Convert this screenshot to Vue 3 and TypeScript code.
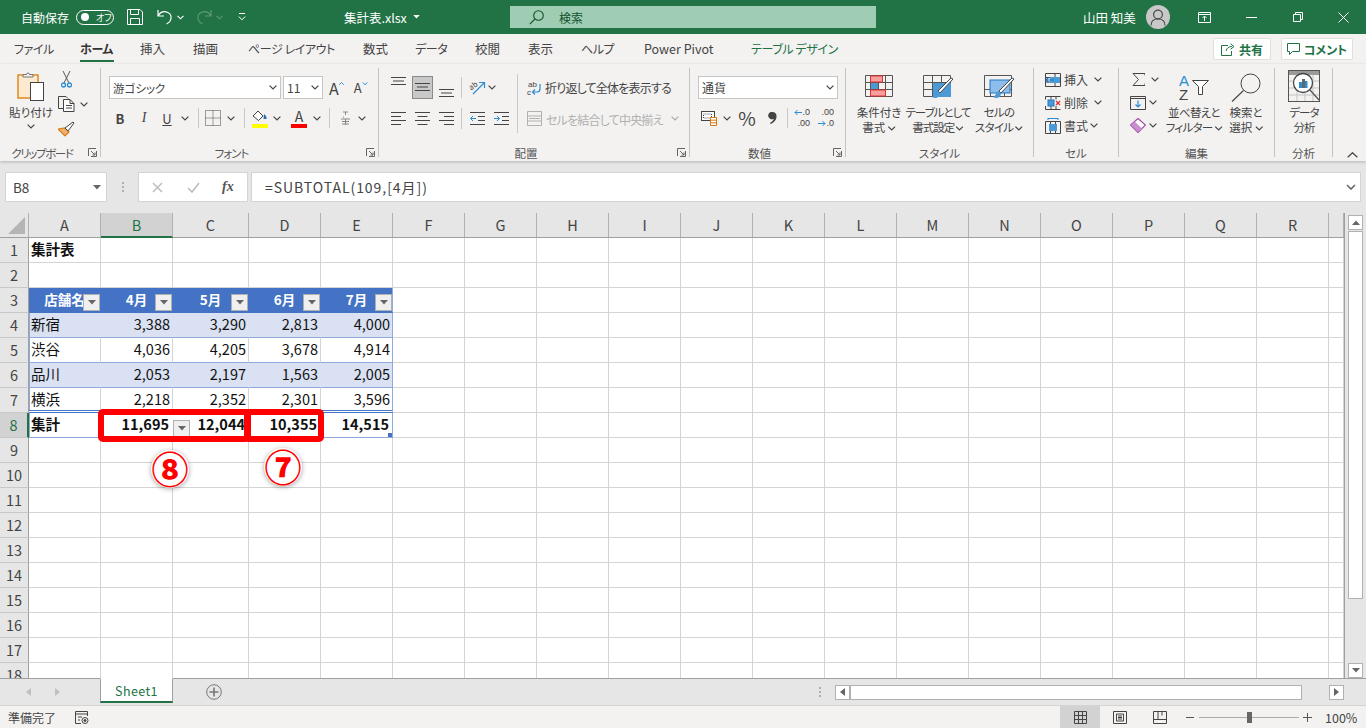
<template>
  <div class="app">
    <svg class="sprite" width="0" height="0">
      <symbol id="chev" viewBox="0 0 8 5"><path d="M.6.6 4 4 7.4.6" fill="none" stroke="#444" stroke-width="1.2" /></symbol>
      <symbol id="launch" viewBox="0 0 9 9"><path d="M.5 8V.5H8M8.5 3v5.5H3M3 3l4 4M4.500 7H7V4.500" fill="none" stroke="#666" /></symbol>
      <symbol id="tri" viewBox="0 0 8 5"><path d="M0 0h8L4 4.500z" fill="#666" /></symbol>
    </svg>

    <!-- タイトルバー -->
    <header class="titlebar">
      <span class="autosave">自動保存</span>
      <span class="toggle"><i class="dot"></i><em>オフ</em></span>
      <svg class="ml13" width="16" height="16" viewBox="0 0 16 16" fill="none" stroke="#fff"><path d="M.5.500h12.500l2.500 2.500v12.500H.5zM3.500.5v5h8v-5M3.500 15.500v-6h9v6" /></svg>
      <svg class="ml14" width="16" height="16" viewBox="0 0 16 16" fill="none" stroke="#fff" stroke-width="1.200"><path d="M1 1v6h6M1.500 6.500C3 3.500 6 2.300 9 2.800c3.500.6 5.500 3.500 5 6.700-.4 2.500-2 4.300-4.500 5.500" /></svg>
      <svg class="ml4" width="7" height="5" viewBox="0 0 8 5"><path d="M.6.6 4 4 7.400.6" fill="none" stroke="#fff" stroke-width="1.300" /></svg>
      <svg class="ml12" width="16" height="16" viewBox="0 0 16 16" fill="none" stroke="#5b9a78" stroke-width="1.200"><path d="M15 1v6H9M14.500 6.500C13 3.500 10 2.300 7 2.800c-3.500.6-5.500 3.500-5 6.700.4 2.500 2 4.300 4.500 5.500" /></svg>
      <svg class="ml4" width="7" height="5" viewBox="0 0 8 5"><path d="M.6.6 4 4 7.400.6" fill="none" stroke="#5b9a78" stroke-width="1.300" /></svg>
      <svg class="ml15" width="8" height="8" viewBox="0 0 8 8" fill="none" stroke="#fff"><path d="M1 .5h6M.8 3.500 4 6.800l3.200-3.300" /></svg>
      <span class="filename">集計表.xlsx</span>
      <svg class="ml5" width="7" height="4" viewBox="0 0 8 5"><path d="M0 0h8L4 4.500z" fill="#fff" /></svg>
      <div class="search">
        <svg width="15" height="15" viewBox="0 0 15 15" fill="none" stroke="#14532f" stroke-width="1.100"><circle cx="9.500" cy="5.500" r="4.800" /><path d="M6 9 .8 14.200" /></svg>
        <span>検索</span>
      </div>
      <span class="username">山田 知美</span>
      <span class="avatar">
        <svg width="16" height="17" viewBox="0 0 16 17" fill="none" stroke="#4a4a4a" stroke-width="1.200"><circle cx="8" cy="5.500" r="4.400" /><path d="M1 16.500c0-4.500 3-6.500 7-6.500s7 2 7 6.500" /></svg>
      </span>
      <svg class="ml28" width="13" height="11" viewBox="0 0 13 11" fill="none" stroke="#fff"><path d="M.5.500h12v10H.5zM.5 2.500h12M6.500 9V4.500M4.500 6l2-2 2 2" /></svg>
      <svg class="ml35" width="11" height="1" viewBox="0 0 11 1"><path d="M0 .5h11" stroke="#fff" /></svg>
      <svg class="ml36" width="10" height="10" viewBox="0 0 10 10" fill="none" stroke="#fff"><path d="M.5 2.500h7v7h-7zM2.500 2.500v-2h7v7h-2" /></svg>
      <svg class="ml35" width="11" height="11" viewBox="0 0 11 11" fill="none" stroke="#fff"><path d="m.5.500 10 10M10.500.500l-10 10" /></svg>
    </header>

    <!-- タブ -->
    <nav class="tabs">
      <span v-for="t in tabs" :key="t.name" class="tab" :class="t.cls">{{ t.name }}</span>
      <div class="tab-actions">
        <button class="act share">
          <svg width="14" height="13" viewBox="0 0 14 13" fill="none" stroke="#217346"><path d="M7 2.500H.5v10h10V8M5 8c.5-3 3-4.500 6-4.500M9.500 .8l3.500 2.700-3.500 2.800" /></svg>
          共有
        </button>
        <button class="act comment">
          <svg width="13" height="12" viewBox="0 0 13 12" fill="none" stroke="#217346"><path d="M.5.500h12v8H5.500l-3 3v-3h-2z" /></svg>
          コメント
        </button>
      </div>
    </nav>

    <!-- リボン -->
    <section class="ribbon">
      <div class="group launch g1">
        <div class="body clip">
          <div class="paste">
            <svg width="28" height="30" viewBox="0 0 28 30">
              <rect x="1" y="4" width="20" height="23" fill="#fbe9d0" stroke="#e08a1e" stroke-width="1.500" />
              <path d="M6 6V3.500h3.500a1.500 1.500 0 0 1 3 0H16V6z" fill="#f3f2f1" stroke="#777" />
              <rect x="13.500" y="11.500" width="13" height="18" fill="#fff" stroke="#444" />
            </svg>
            <span class="big-text">貼り付け</span>
            <svg class="chev" width="8" height="5"><use href="#chev" /></svg>
          </div>
          <div class="clip-side">
            <svg class="ml3" width="11" height="17" viewBox="0 0 11 17" fill="none"><path d="M2 0l6 12M9 0 3 12" stroke="#555" /><circle cx="2.500" cy="14" r="2" stroke="#2a8dd4" stroke-width="1.300" /><circle cx="8.500" cy="14" r="2" stroke="#2a8dd4" stroke-width="1.300" /></svg>
            <div class="row-c">
              <svg width="17" height="16" viewBox="0 0 17 16" fill="none" stroke="#444"><path d="M5 12.500H.5V.5H8l2 2" /><path d="M5.500 3.500H12l4 4v8H5.500zM12 3.500v4h4M8 9.500h6M8 12h6" fill="#fff" /></svg>
              <svg class="ml5" width="8" height="5"><use href="#chev" /></svg>
            </div>
            <svg width="17" height="17" viewBox="0 0 17 17" fill="none"><path d="M0 9l7 7 4-4-4-4z" fill="#f0b070" stroke="#d67b12" stroke-width="1.200" /><path d="M7 8l3 3 6-8-1-1z" fill="#fff" stroke="#444" /></svg>
          </div>
        </div>
        <div class="label">クリップボード</div>
        <svg class="launcher" width="9" height="9"><use href="#launch" /></svg>
      </div>

      <div class="group launch g2">
        <div class="body stack font-body">
          <div class="row1">
            <div class="select w172"><span class="yu">游ゴシック</span><svg width="8" height="5"><use href="#chev" /></svg></div>
            <div class="select w40 ml2"><span>11</span><svg width="8" height="5"><use href="#chev" /></svg></div>
            <span class="grow">A<svg width="5" height="3" viewBox="0 0 5 3"><path d="M.3 2.700 2.500.5l2.200 2.200" fill="none" stroke="#2a8dd4" /></svg></span>
            <span class="shrink">A<svg width="6" height="3" viewBox="0 0 6 3"><path d="M.5.300 3 2.700 5.500.3" fill="none" stroke="#2a8dd4" /></svg></span>
          </div>
          <div class="row2">
            <b class="glyph w22">B</b>
            <i class="glyph w22 ml2 serif">I</i>
            <span class="glyph w22 ml1 under">U</span>
            <svg class="ml3" width="8" height="5"><use href="#chev" /></svg>
            <i class="sep ml9"></i>
            <svg class="ml6" width="16" height="16" viewBox="0 0 16 16" fill="none" stroke="#444" stroke-dasharray="1 1"><path d="M.5.500h15v15H.5zM8 .5v15M.5 8h15" /></svg>
            <svg class="ml6" width="8" height="5"><use href="#chev" /></svg>
            <i class="sep ml9"></i>
            <svg class="ml7" width="16" height="19" viewBox="0 0 16 19"><path d="M1 7l5-5 5 5-4.500 4.500z" fill="#fff" stroke="#444" /><path d="M12 5c2 2 3 3 2.500 5h-3z" fill="#2a6fb5" /><rect y="15" width="16" height="4" fill="#ff0" /></svg>
            <svg class="ml5" width="8" height="5"><use href="#chev" /></svg>
            <span class="fontcolor ml10">A</span>
            <svg class="ml6" width="8" height="5"><use href="#chev" /></svg>
            <i class="sep ml8"></i>
            <svg class="ml11" width="9" height="15" viewBox="0 0 9 15" fill="none" stroke="#888"><path d="M2 1h5M4.500 1v3M2 6l1 0M0 8h9M1 10.500h7M1 13h7M4.500 8v6" /></svg>
            <svg class="ml8" width="8" height="5"><use href="#chev" /></svg>
          </div>
        </div>
        <div class="label">フォント</div>
        <svg class="launcher" width="9" height="9"><use href="#launch" /></svg>
      </div>

      <div class="group launch g3">
        <div class="body align-body">
          <div class="stack">
            <div class="row1">
              <svg width="15" height="9" viewBox="0 0 15 9" class="up6"><path d="M0 .5h15M2 4h11M0 7.500h15" stroke="#444" /></svg>
              <span class="active ml6"><svg width="15" height="9" viewBox="0 0 15 9"><path d="M0 .5h15M2 4h11M0 7.500h15" stroke="#444" /></svg></span>
              <svg class="ml6 down6" width="15" height="9" viewBox="0 0 15 9"><path d="M0 .5h15M2 4h11M0 7.500h15" stroke="#444" /></svg>
              <i class="sep ml7 tall"></i>
              <svg class="ml7" width="16" height="16" viewBox="0 0 16 16" overflow="visible"><text x="1" y="9" font-size="7.500" fill="#444" class="svgt" transform="rotate(-35 4 8)">ab</text><path d="M4 14 15 3M10 2.500h5.500V8" fill="none" stroke="#2a8dd4" stroke-width="1.200" /></svg>
              <svg class="ml3" width="8" height="5"><use href="#chev" /></svg>
            </div>
            <div class="row2">
              <svg width="15" height="13" viewBox="0 0 15 13"><path d="M0 .5h15M0 4.500h10M0 8.500h15M0 12.500h10" stroke="#444" /></svg>
              <svg class="ml9" width="15" height="13" viewBox="0 0 15 13"><path d="M0 .5h15M2.500 4.500h10M0 8.500h15M2.500 12.500h10" stroke="#444" /></svg>
              <svg class="ml9" width="15" height="13" viewBox="0 0 15 13"><path d="M0 .5h15M5 4.500h10M0 8.500h15M5 12.500h10" stroke="#444" /></svg>
              <i class="sep ml7 tall"></i>
              <svg class="ml8" width="15" height="13" viewBox="0 0 15 13" fill="none"><path d="M0 .5h15M8 4.500h7M8 8.500h7M0 12.500h15" stroke="#444" /><path d="M6 6.500H.5M3 4 .5 6.500 3 9" stroke="#2a8dd4" /></svg>
              <svg class="ml9" width="15" height="13" viewBox="0 0 15 13" fill="none"><path d="M0 .5h15M8 4.500h7M8 8.500h7M0 12.500h15" stroke="#444" /><path d="M0 6.500h5.500M3 4l2.500 2.500L3 9" stroke="#2a8dd4" /></svg>
            </div>
          </div>
          <i class="sep-long"></i>
          <div class="stack wrap-col">
            <div class="row1">
              <svg width="15" height="18" viewBox="0 0 15 18"><text x="1" y="8" font-size="8" fill="#444" class="svgl">ab</text><text x="0" y="16" font-size="8" fill="#444" class="svgl">c</text><path d="M13 5v5c0 2-1 3-3 3H6M8 10.500 5.500 13 8 15.500" fill="none" stroke="#2a8dd4" stroke-width="1.200" /></svg>
              <span class="txt ml3">折り返して全体を表示する</span>
            </div>
            <div class="row2 off">
              <svg width="15" height="15" viewBox="0 0 15 15" fill="none" stroke="#b0b0b0"><path d="M.5.500h14v14H.5zM.5 5h14M.5 10h14M2 7.500h11" /></svg>
              <span class="txt ml4">セルを結合して中央揃え</span>
              <svg class="ml8 dim" width="8" height="5"><use href="#chev" /></svg>
            </div>
          </div>
        </div>
        <div class="label">配置</div>
        <svg class="launcher" width="9" height="9"><use href="#launch" /></svg>
      </div>

      <div class="group launch g4">
        <div class="body stack num-body">
          <div class="row1"><div class="select w140"><span>通貨</span><svg width="8" height="5"><use href="#chev" /></svg></div></div>
          <div class="row2">
            <svg class="ml3" width="16" height="15" viewBox="0 0 16 15"><rect x=".5" y=".5" width="13" height="9" fill="#fff" stroke="#444" /><path d="M2.500 3h8v4h-8z" fill="none" stroke="#444" stroke-dasharray="1 1" /><path d="M9.500 6.500h6v8h-6z" fill="#fff" stroke="#d67b12" /><path d="M9.500 9.200h6M9.500 11.800h6" stroke="#d67b12" /></svg>
            <svg class="ml6" width="8" height="5"><use href="#chev" /></svg>
            <span class="pct">%</span>
            <svg class="ml11" width="9" height="12" viewBox="0 0 9 12"><path d="M4.500 0a4 4 0 0 1 4 4.500c0 3.500-2.500 6-6 7.500l-.5-1c2-1 3.500-2.500 3.800-4.200A3.700 3.700 0 1 1 4.500 0z" fill="#444" /></svg>
            <i class="sep ml10"></i>
            <span class="decs ml7">
              <span class="dl"><svg width="8" height="7" viewBox="0 0 8 7"><path d="M8 3.500H1M3.500 1 1 3.500 3.500 6" fill="none" stroke="#2a8dd4" /></svg>.0</span>
              <span class="dl">.00</span>
            </span>
            <span class="decs ml9">
              <span class="dl">.00</span>
              <span class="dl"><svg width="8" height="7" viewBox="0 0 8 7"><path d="M0 3.500h7M4.500 1 7 3.500 4.500 6" fill="none" stroke="#2a8dd4" /></svg>.0</span>
            </span>
          </div>
        </div>
        <div class="label">数値</div>
        <svg class="launcher" width="9" height="9"><use href="#launch" /></svg>
      </div>

      <div class="group g5">
        <div class="body big-row styles">
          <div class="big w54">
            <svg width="28" height="22" viewBox="0 0 28 22"><path d="M.5.500h27v21H.5zM.5 7.500h27M.5 14.500h27M5.500.500v21M13.500.500v21M20.500.500v21" fill="none" stroke="#555" /><rect x="5.500" y="1" width="12" height="6" fill="#f8a0a0" stroke="#e03030" /><rect x="6" y="8" width="7" height="6" fill="#4b9ad6" /><rect x="5.500" y="15" width="15" height="6" fill="#f8a0a0" stroke="#e03030" /></svg>
            <span class="big-text">条件付き<br />書式 <svg width="8" height="5"><use href="#chev" /></svg></span>
          </div>
          <div class="big w64">
            <svg width="31" height="28" viewBox="0 0 31 28"><path d="M.5.500h27v21H.5zM.5 7.500h27M.5 14.500h27M9.500.500v21M18.500.500v21" fill="none" stroke="#555" /><rect x="10" y="8" width="18" height="14" fill="#4b9ad6" /><path d="M30 4 17 18l-2-2L28 3z" fill="#fff" stroke="#444" /><path d="M15 16c-3 0-3 5-6 6 3 2 8 1 8-4z" fill="#4b9ad6" /></svg>
            <span class="big-text tighter">テーブルとして<br />書式設定 <svg width="8" height="5"><use href="#chev" /></svg></span>
          </div>
          <div class="big w58">
            <svg width="31" height="28" viewBox="0 0 31 28"><path d="M.5.500h27v21H.5zM.5 14.500h27M6.500 14.500v7M20.500 14.500v7" fill="none" stroke="#555" /><rect x="6" y="5" width="20" height="13" fill="#8dbdea" stroke="#1f77c4" /><path d="M30 4 17 18l-2-2L28 3z" fill="#fff" stroke="#444" /><path d="M15 16c-3 0-3 5-6 6 3 2 8 1 8-4z" fill="#4b9ad6" /></svg>
            <span class="big-text tight">セルの<br />スタイル <svg width="8" height="5"><use href="#chev" /></svg></span>
          </div>
        </div>
        <div class="label">スタイル</div>
      </div>

      <div class="group g6">
        <div class="body lines cells">
          <div class="line">
            <svg width="16" height="14" viewBox="0 0 16 14" fill="none"><path d="M.5.500h15v13H.5zM10 .5v13M.5 4.500h15M.5 9h15" stroke="#444" /><rect x="5" y="4" width="10" height="6" fill="#4b9ad6" /><path d="M9 7H1M3.500 4.500 1 7l2.500 2.500" stroke="#1f77c4" stroke-width="1.200" /></svg>
            <span class="txt w33">挿入</span><svg width="8" height="5"><use href="#chev" /></svg>
          </div>
          <div class="line">
            <svg width="16" height="14" viewBox="0 0 16 14" fill="none"><path d="M.5.500h15M.5 13.500h15M.5.500v3M.5 10v3.500M6 .5v3M6 10v3.500M11 .5v3M11 10v3.500" stroke="#444" /><rect x="3" y="4" width="6" height="6" fill="#4b9ad6" stroke="#1f77c4" /><path d="m11 5 4 4M15 5l-4 4" stroke="#e03030" stroke-width="1.300" /></svg>
            <span class="txt w33">削除</span><svg width="8" height="5"><use href="#chev" /></svg>
          </div>
          <div class="line">
            <svg width="16" height="16" viewBox="0 0 16 16" fill="none"><path d="M3 .5h10M3 0v2M13 0v2" stroke="#2a8dd4" /><path d="M.5 3.500h15v12H.5zM5.500 3.500v12M10.500 3.500v12" stroke="#444" /><rect x="4" y="6" width="8" height="7" fill="#4b9ad6" /></svg>
            <span class="txt">書式</span><svg class="ml2" width="8" height="5"><use href="#chev" /></svg>
          </div>
        </div>
        <div class="label">セル</div>
      </div>

      <div class="group g7">
        <div class="body big-row edit">
          <div class="lines edit-side">
            <div class="line"><svg class="ml2" width="13" height="13" viewBox="0 0 13 13" fill="none" stroke="#444"><path d="M13 2.500V.5H1l5.500 6-5.500 6h12v-2" /></svg><svg class="ml6" width="8" height="5"><use href="#chev" /></svg></div>
            <div class="line"><svg width="16" height="14" viewBox="0 0 16 14" fill="none"><path d="M.5.500h15v13H.5zM.5 2.500h15" stroke="#444" /><path d="M8 4.500v6M5.500 8.500 8 11l2.500-2.500" stroke="#2a8dd4" stroke-width="1.200" /></svg><svg class="ml3" width="8" height="5"><use href="#chev" /></svg></div>
            <div class="line"><svg width="16" height="15" viewBox="0 0 16 15"><path d="M8 .5 15.500 7 8 14.500.5 7z" fill="#fff" stroke="#a349a4" stroke-width="1.200" /><path d="M1 7l3.500-3.500L12 10.500 8 14z" fill="#c78fd0" /></svg><svg class="ml3" width="8" height="5"><use href="#chev" /></svg></div>
          </div>
          <div class="big w52">
            <div class="sort">
              <span class="az"><em class="a">A</em><em>Z</em></span>
              <svg width="17" height="16" viewBox="0 0 17 16"><path d="M.5.500h16l-6 6v8h-4v-8z" fill="#fff" stroke="#444" /></svg>
            </div>
            <span class="big-text tight">並べ替えと<br />フィルター <svg width="8" height="5"><use href="#chev" /></svg></span>
          </div>
          <div class="big w50 ml1">
            <svg width="30" height="29" viewBox="0 0 30 29" fill="none" stroke="#444"><circle cx="19.500" cy="10.500" r="9.500" /><path d="M12.500 17.500 1 28.500" stroke-width="1.100" /></svg>
            <span class="big-text">検索と<br />選択 <svg width="8" height="5"><use href="#chev" /></svg></span>
          </div>
        </div>
        <div class="label">編集</div>
      </div>

      <div class="group g8">
        <div class="body big-row analysis">
          <div class="big w58">
            <svg width="32" height="32" viewBox="0 0 32 32"><rect x=".5" y=".5" width="31" height="31" fill="#f3f2f1" stroke="#555" /><rect x="1" y="1" width="30" height="4" fill="#9a9a9a" /><path d="M1 11h30M1 18h30M1 25h30M9 5v26M17 5v26M25 5v26" stroke="#c4c4c4" /><circle cx="15" cy="13" r="9.500" fill="#fff" stroke="#444" stroke-width="1.300" /><rect x="11" y="12" width="3" height="6" fill="#2a8dd4" /><rect x="14" y="9" width="3" height="9" fill="#666" /><rect x="17" y="11" width="2.500" height="7" fill="#2a8dd4" /><path d="m22 20 9 10" stroke="#555" stroke-width="1.300" /></svg>
            <span class="big-text tighter">データ<br />分析</span>
          </div>
        </div>
        <div class="label">分析</div>
      </div>

      <svg class="collapse" width="11" height="6" viewBox="0 0 11 6"><path d="m.7 5.300 4.800-4.600 4.800 4.600" fill="none" stroke="#444" stroke-width="1.200" /></svg>
    </section>

    <!-- 数式バー -->
    <div class="formula">
      <div class="namebox"><span>B8</span><svg width="8" height="5"><use href="#tri" /></svg></div>
      <span class="grip"><i></i><i></i><i></i></span>
      <div class="fxbox">
        <svg width="11" height="11" viewBox="0 0 11 11"><path d="m1 1 9 9M10 1l-9 9" stroke="#bdbdbd" stroke-width="1.500" /></svg>
        <svg width="13" height="11" viewBox="0 0 13 11"><path d="m1 6 4 4 7-9" fill="none" stroke="#bdbdbd" stroke-width="1.600" /></svg>
        <span class="fx">fx</span>
      </div>
      <div class="input">
        <span>=SUBTOTAL(109,[4月])</span>
        <svg width="10" height="6" viewBox="0 0 10 6"><path d="M1 1l4 4 4-4" fill="none" stroke="#666" stroke-width="1.600" /></svg>
      </div>
    </div>

    <!-- シート -->
    <div class="sheet-wrap">
      <div class="sheet">
        <div class="corner"><i></i></div>
        <div v-for="c in cols" :key="c" class="ch" :class="{ sel: c === 'B' }">{{ c === 'S' ? '' : c }}</div>
        <template v-for="r in rows" :key="r">
          <div class="rh" :class="{ sel: r === 8 }">{{ r }}</div>
          <div v-for="c in cols" :key="c + r" class="cell" :class="cellClass(r, c)">
            {{ cellText(r, c) }}
            <span v-if="r === 3 && tableCols.includes(c)" class="filter"><svg width="8" height="5"><use href="#tri" /></svg></span>
            <span v-if="r === 8 && c === 'C'" class="filter active-f"><svg width="8" height="5"><use href="#tri" /></svg></span>
            <i v-if="r === 8 && c === 'E'" class="corner-mark"></i>
          </div>
        </template>

        <div class="redbox red-a"></div>
        <div class="redbox red-b"></div>
        <div class="mark mark-8">⑧</div>
        <div class="mark mark-7">⑦</div>
      </div>

      <aside class="vscroll">
        <span class="sbtn"><svg width="8" height="5" viewBox="0 0 8 5"><path d="M0 5h8L4 .5z" fill="#666" /></svg></span>
        <span class="vthumb"></span>
        <span class="sbtn bottom"><svg width="8" height="5"><use href="#tri" /></svg></span>
      </aside>
    </div>

    <!-- シートタブ -->
    <div class="tabbar">
      <svg class="ml26" width="5" height="8" viewBox="0 0 5 8"><path d="M5 0v8L0 4z" fill="#c0c0c0" /></svg>
      <svg class="ml24" width="5" height="8" viewBox="0 0 5 8"><path d="M0 0v8l5-4z" fill="#c0c0c0" /></svg>
      <span class="sheet-tab">Sheet1</span>
      <svg class="ml33" width="16" height="16" viewBox="0 0 16 16" fill="none" stroke="#777"><circle cx="8" cy="8" r="7.300" /><path d="M8 3.500v9M3.500 8h9" stroke-width="1.600" /></svg>
      <span class="grip h"><i></i><i></i><i></i></span>
      <div class="hscroll">
        <span class="hbtn"><svg width="5" height="8" viewBox="0 0 5 8"><path d="M5 0v8L0 4z" fill="#666" /></svg></span>
        <span class="hthumb"></span>
        <span class="hbtn"><svg width="5" height="8" viewBox="0 0 5 8"><path d="M0 0v8l5-4z" fill="#666" /></svg></span>
      </div>
    </div>

    <!-- ステータスバー -->
    <footer class="status">
      <span class="ready">準備完了</span>
      <svg class="ml19" width="14" height="13" viewBox="0 0 14 13" fill="none" stroke="#444"><path d="M6 12.500H.5V.5h12V5M.5 3h12M3 6h4M3 9h2" /><circle cx="10" cy="9.500" r="3" /><circle cx="10" cy="9.500" r="1" fill="#444" /></svg>
      <div class="views">
        <span class="view on"><svg width="13" height="13" viewBox="0 0 13 13" fill="none" stroke="#444"><path d="M.5.500h12v12H.5zM4.500.5v12M8.500.5v12M.5 4.500h12M.5 8.500h12" /></svg></span>
        <span class="view"><svg width="14" height="13" viewBox="0 0 14 13" fill="none" stroke="#444"><path d="M.5.500h13v12H.5zM3.500 3h7v7h-7zM5 5h4M5 6.500h4M5 8h4" /></svg></span>
        <span class="view"><svg width="14" height="13" viewBox="0 0 14 13" fill="none" stroke="#444"><path d="M.5.500h13v12H.5zM.5 8.500h13M5 .5v8M9 .5v4" /></svg></span>
      </div>
      <svg class="ml6" width="8" height="1"><path d="M0 .5h8" stroke="#555" /></svg>
      <div class="slider"><i></i></div>
      <svg class="ml4" width="9" height="9" viewBox="0 0 9 9"><path d="M0 4.500h9M4.500 0v9" stroke="#555" /></svg>
      <span class="zoom">100%</span>
    </footer>
  </div>
</template>

<script setup lang="ts">
const tabs = [
  { name: 'ファイル', cls: 't1 kana' },
  { name: 'ホーム', cls: 't2 kana home' },
  { name: '挿入', cls: 't3' },
  { name: '描画', cls: 't4' },
  { name: 'ページ レイアウト', cls: 't5 kana' },
  { name: '数式', cls: 't6' },
  { name: 'データ', cls: 't7 kana' },
  { name: '校閲', cls: 't8' },
  { name: '表示', cls: 't9' },
  { name: 'ヘルプ', cls: 't10 kana' },
  { name: 'Power Pivot', cls: 't11' },
  { name: 'テーブル デザイン', cls: 't12 kana design' },
]

const cols = 'ABCDEFGHIJKLMNOPQRS'.split('')
const rows = Array.from({ length: 18 }, (_, i) => i + 1)
const tableCols = ['A', 'B', 'C', 'D', 'E']

const table: Record<number, string[]> = {
  1: ['集計表'],
  3: ['店舗名', '4月', '5月', '6月', '7月'],
  4: ['新宿', '3,388', '3,290', '2,813', '4,000'],
  5: ['渋谷', '4,036', '4,205', '3,678', '4,914'],
  6: ['品川', '2,053', '2,197', '1,563', '2,005'],
  7: ['横浜', '2,218', '2,352', '2,301', '3,596'],
  8: ['集計', '11,695', '12,044', '10,355', '14,515'],
}

function cellText(r: number, c: string): string {
  const i = tableCols.indexOf(c)
  return i >= 0 && table[r] ? (table[r][i] ?? '') : ''
}

function cellClass(r: number, c: string) {
  const inTable = tableCols.includes(c)
  return {
    num: c !== 'A' && r > 3,
    bold: r === 1 || r === 8,
    head: inTable && r === 3,
    band: inTable && (r === 4 || r === 6),
    body: inTable && r >= 4 && r <= 7,
    total: inTable && r === 8,
    last: c === 'E' && r >= 3 && r <= 8,
    first: c === 'A' && r >= 4 && r <= 8,
    pre: inTable && r === 7,
  }
}
</script>

<style>
html, body { margin: 0; background: #e6e6e6; }
</style>

<style scoped>
.app {
  width: 1366px;
  height: 728px;
  overflow: hidden;
  display: flex;
  flex-direction: column;
  position: relative;
  background: #e6e6e6;
  color: #444;
  font-family: "Noto Sans CJK JP", "Noto Sans", sans-serif;
  font-feature-settings: "palt";
  font-size: 12px;
}
.sprite { position: absolute; }
svg { flex: none; display: block; }
i, em { font-style: normal; }

.ml1 { margin-left: 1px; } .ml2 { margin-left: 2px; } .ml3 { margin-left: 3px; } .ml4 { margin-left: 4px; }
.ml5 { margin-left: 5px; } .ml6 { margin-left: 6px; } .ml7 { margin-left: 7px; } .ml8 { margin-left: 8px; }
.ml9 { margin-left: 9px; } .ml10 { margin-left: 10px; } .ml11 { margin-left: 11px; } .ml12 { margin-left: 12px; }
.ml13 { margin-left: 13px; } .ml14 { margin-left: 14px; } .ml15 { margin-left: 15px; } .ml19 { margin-left: 19px; }
.ml24 { margin-left: 24px; } .ml26 { margin-left: 26px; } .ml28 { margin-left: 28px; } .ml33 { margin-left: 33px; }
.ml35 { margin-left: 35px; } .ml36 { margin-left: 36px; }

/* title bar */
.titlebar {
  height: 34px;
  flex: none;
  background: #217346;
  color: #fff;
  display: flex;
  align-items: center;
  padding-left: 21px;
  font-size: 12px;
}
.autosave { width: 47px; white-space: nowrap; }
.toggle {
  width: 38px;
  height: 15px;
  box-sizing: border-box;
  margin-left: 8px;
  border: 1px solid #fff;
  border-radius: 8px;
  display: flex;
  align-items: center;
  padding-left: 4px;
}
.toggle .dot { width: 8px; height: 8px; border-radius: 50%; background: #fff; }
.toggle em { font-size: 9px; margin-left: 7px; }
.filename { margin-left: 98px; width: 64px; white-space: nowrap; font-size: 12.500px; }
.search {
  margin-left: 90px;
  width: 366px;
  height: 22px;
  background: #9fcdb3;
  color: #14532f;
  display: flex;
  align-items: center;
  padding-left: 19px;
  box-sizing: border-box;
}
.search span { margin-left: 15px; }
.username { margin-left: 207px; width: 52px; white-space: nowrap; font-size: 12.500px; }
.avatar {
  margin-left: 11px;
  width: 24px;
  height: 24px;
  border-radius: 50%;
  background: #c8c8c8;
  display: flex;
  align-items: center;
  justify-content: center;
  overflow: hidden;
}

/* tabs */
.tabs {
  height: 30px;
  flex: none;
  background: #f3f2f1;
  display: flex;
  align-items: center;
  position: relative;
  font-size: 12.500px;
  padding-left: 14px;
}
.tab { white-space: nowrap; position: relative; line-height: 30px; }
.kana { font-size: 12px; letter-spacing: -.4px; }
.t1 { width: 66px; } .t2 { width: 60px; } .t3 { width: 53px; } .t4 { width: 55px; }
.t5 { width: 115px; } .t6 { width: 52px; } .t7 { width: 60px; } .t8 { width: 53px; }
.t9 { width: 53px; } .t10 { width: 63px; } .t11 { width: 107px; } .t12 { width: 100px; }
.home { font-weight: 700; color: #333; }
.home::after {
  content: "";
  position: absolute;
  left: 0;
  top: 26px;
  width: 34px;
  height: 2px;
  background: #217346;
}
.design { color: #217346; }
.tab-actions { margin-left: auto; align-self: flex-start; display: flex; gap: 10px; padding: 4px 13px 0 0; }
.act {
  height: 22px;
  padding: 0;
  background: #fff;
  border: 1px solid #e1dfdd;
  border-radius: 2px;
  color: #217346;
  font: 700 12px "Noto Sans CJK JP", sans-serif;
  font-feature-settings: "palt";
  display: flex;
  align-items: center;
  justify-content: center;
  gap: 4px;
}
.share { width: 58px; }
.comment { width: 72px; }

/* ribbon */
.ribbon {
  height: 97px;
  flex: none;
  background: #f3f2f1;
  display: flex;
  padding-top: 4px;
  box-sizing: border-box;
  position: relative;
  box-shadow: 0 1px 3px rgba(0, 0, 0, .22);
  z-index: 2;
}
.group {
  height: 89px;
  box-sizing: border-box;
  border-right: 1px solid #c4c4c4;
  display: flex;
  flex-direction: column;
  position: relative;
  flex: none;
}
.g1 { width: 101px; } .g2 { width: 278px; } .g3 { width: 311px; } .g4 { width: 156px; }
.g5 { width: 188px; } .g6 { width: 85px; } .g7 { width: 156px; } .g8 { width: 58px; }
.body { flex: 1; min-height: 0; }
.label {
  height: 8px;
  line-height: 8px;
  text-align: center;
  font-size: 11.500px;
  white-space: nowrap;
  color: #555;
}
.launch .label { padding-right: 16px; }
.g1 .label { letter-spacing: -1.400px; }
.g2 .label { letter-spacing: -1px; }
.launcher { position: absolute; right: 3px; bottom: 0; }
.collapse { position: absolute; right: 8px; top: 88px; }

.clip { display: flex; padding-left: 10px; }
.paste { width: 42px; display: flex; flex-direction: column; align-items: center; padding-top: 3px; }
.big-text { font-size: 11.500px; line-height: 15px; text-align: center; white-space: nowrap; }
.big-text svg { display: inline-block; vertical-align: 1px; }
.tight { letter-spacing: -.7px; }
.tighter { letter-spacing: -1px; }
.paste .big-text { margin-top: 4px; }
.paste .chev { margin-top: 4px; }
.clip-side { margin-left: 6px; padding-top: 3px; display: flex; flex-direction: column; gap: 8px; }
.row-c { display: flex; align-items: center; }

.stack { display: flex; flex-direction: column; padding-top: 8px; }
.row1 { height: 23px; display: flex; align-items: center; }
.row2 { height: 20px; margin-top: 9px; display: flex; align-items: center; }
.font-body { padding-left: 8px; }
.select {
  height: 23px;
  box-sizing: border-box;
  background: #fff;
  border: 1px solid #c6c6c6;
  display: flex;
  align-items: center;
  justify-content: space-between;
  padding: 0 3px 0 3px;
  font-size: 12px;
}
.select .yu { font-size: 11.500px; }
.w172 { width: 172px; } .w40 { width: 40px; } .w140 { width: 140px; }
.svgt { font-family: "Noto Sans CJK JP", sans-serif; }
.svgl { font-family: "Liberation Sans", sans-serif; }
.grow, .shrink { display: flex; align-items: flex-start; line-height: 18px; }
.grow { margin-left: 6px; font-size: 16px; }
.grow svg { margin-top: 3px; }
.shrink { margin-left: 10px; font-size: 13px; }
.shrink svg { margin-top: 3px; }
.glyph { text-align: center; font-size: 13px; display: block; font-style: normal; }
.w22 { width: 22px; }
.serif { font-family: "Liberation Serif", serif; font-style: italic; font-size: 14px; }
.under { text-decoration: underline; }
.fontcolor {
  width: 16px;
  height: 19px;
  box-sizing: border-box;
  border-bottom: 4px solid #f00;
  text-align: center;
  font-size: 14px;
  line-height: 15px;
}
.sep { width: 1px; height: 20px; background: #c8c8c8; display: block; flex: none; }
.tall { height: 21px; }

.align-body { display: flex; padding-left: 12px; }
.active {
  width: 21px;
  height: 23px;
  box-sizing: border-box;
  background: #c8c8c8;
  border: 1px solid #8a8a8a;
  display: flex;
  align-items: center;
  justify-content: center;
}
.up6 { transform: translateY(-6px); }
.down6 { transform: translateY(6px); }
.sep-long { width: 1px; height: 59px; margin: 6px 0 0 8px; background: #c8c8c8; display: block; flex: none; }
.wrap-col { padding-left: 9px; }
.txt { font-size: 12px; white-space: nowrap; }
.wrap-col .txt { letter-spacing: -.8px; }
.off { color: #b0b0b0; }
.off .txt { padding-top: 3px; }
.dim { opacity: .4; }

.num-body { padding-left: 8px; }
.pct { margin-left: 6px; font-size: 19px; width: 20px; text-align: center; line-height: 20px; }
.decs {
  display: flex;
  flex-direction: column;
  align-items: flex-end;
  width: 15px;
  font: 9px/11px "Liberation Sans", sans-serif;
  white-space: nowrap;
}
.dl { display: flex; align-items: center; }

.big-row { display: flex; }
.big { display: flex; flex-direction: column; align-items: center; flex: none; position: relative; }
.big .big-text { position: absolute; top: 37px; left: 50%; transform: translateX(-50%); }
.styles { padding: 7px 0 0 6px; }
.styles .big .big-text { top: 30px; }
.w54 { width: 54px; } .w64 { width: 64px; } .w58 { width: 58px; } .w52 { width: 52px; } .w50 { width: 50px; }

.lines { display: flex; flex-direction: column; }
.line { height: 23px; display: flex; align-items: center; }
.cells { padding-left: 11px; }
.cells .txt { margin-left: 3px; font-size: 12px; }
.w33 { width: 30px; }
.edit { padding-left: 11px; }
.edit-side { width: 38px; }
.edit .big { padding-top: 5px; box-sizing: border-box; height: 68px; }
.sort { display: flex; align-items: center; width: 30px; height: 29px; }
.az { display: flex; flex-direction: column; font: 15px/14px "Liberation Sans", sans-serif; width: 13px; }
.az .a { color: #2a8dd4; }
.analysis .big { padding-top: 2px; }

/* formula */
.formula {
  height: 52px;
  flex: none;
  display: flex;
  align-items: center;
  padding: 0 5px;
  box-sizing: border-box;
  font-size: 14px;
}
.namebox, .fxbox, .input {
  height: 30px;
  box-sizing: border-box;
  background: #fff;
  border: 1px solid #d4d4d4;
  display: flex;
  align-items: center;
}
.namebox { width: 102px; justify-content: space-between; padding: 0 5px 0 7px; color: #444; font-size: 13.500px; }
.grip { display: flex; flex-direction: column; gap: 2px; margin-left: 15px; width: 2px; }
.grip i { display: block; width: 2px; height: 2px; background: #b0b0b0; }
.fxbox { width: 110px; margin-left: 14px; padding-left: 13px; }
.fxbox svg + svg { margin-left: 24px; }
.fx { font: italic 700 14px "Liberation Serif", serif; margin-left: 22px; color: #555; }
.input { flex: 1; margin-left: 3px; padding: 0 4px 0 13px; justify-content: space-between; color: #444; letter-spacing: .95px; }

/* sheet */
.sheet-wrap { height: 465px; flex: none; display: flex; background: #fff; }
.sheet {
  width: 1344px;
  height: 465px;
  overflow: hidden;
  position: relative;
  display: grid;
  grid-template-columns: 29px 72px 72px 76px 72px 72px repeat(13, 72px) 15px;
  grid-auto-rows: 25px;
  font-size: 14.500px;
  font-feature-settings: normal;
  color: #111;
  flex: none;
}
.corner, .ch, .rh { background: #e6e6e6; box-sizing: border-box; }
.corner { border-right: 1px solid #b1b1b1; border-bottom: 1px solid #9f9f9f; position: relative; }
.corner i {
  position: absolute;
  left: 8px;
  top: 4px;
  width: 17px;
  height: 17px;
  background: #b5b5b5;
  clip-path: polygon(100% 0, 100% 100%, 0 100%);
}
.ch {
  border-right: 1px solid #b1b1b1;
  border-bottom: 1px solid #9f9f9f;
  text-align: center;
  line-height: 24px;
  color: #444;
}
.ch.sel { background: #d2d2d2; color: #217346; border-bottom: 2px solid #217346; }
.rh {
  border-right: 1px solid #9f9f9f;
  border-bottom: 1px solid #c8c8c8;
  text-align: center;
  line-height: 23px;
  color: #444;
}
.rh.sel { background: #d2d2d2; color: #217346; border-right: 2px solid #217346; }
.cell {
  box-sizing: border-box;
  border-right: 1px solid #d4d4d4;
  border-bottom: 1px solid #d4d4d4;
  padding: 0 2px;
  line-height: 22px;
  white-space: nowrap;
  position: relative;
}
.num { text-align: right; }
.bold { font-weight: 700; }
.head {
  background: #4472c4;
  color: #fff;
  font-weight: 700;
  text-align: center;
  border-color: #4472c4;
  font-size: 13.500px;
}
.band { background: #d9e1f2; border-right-color: #d9e1f2; border-bottom-color: #8ea9db; }
.body { border-bottom-color: #8ea9db; }
.pre { border-bottom: 3px double #4472c4; }
.total { border-bottom-color: #8ea9db; border-right-color: #fff; padding-right: 3px; }
.last { border-right-color: #8ea9db; }
.first { box-shadow: inset 1px 0 #8ea9db; }
.filter {
  position: absolute;
  right: 0;
  bottom: 1px;
  width: 17px;
  height: 17px;
  box-sizing: border-box;
  background: #efefef;
  border: 1px solid #b0b0b0;
  display: flex;
  align-items: center;
  justify-content: center;
}
.active-f { left: 0; right: auto; bottom: 0; z-index: 1; }
.corner-mark { position: absolute; right: 0; bottom: 0; width: 4px; height: 4px; background: #4472c4; }
.redbox {
  position: absolute;
  top: 196px;
  height: 33px;
  box-sizing: border-box;
  border: 6px solid #f00;
  border-radius: 5px;
  z-index: 3;
}
.red-a { left: 98px; width: 153px; }
.red-b { left: 244px; width: 80px; }
.mark {
  position: absolute;
  z-index: 3;
  width: 38px;
  height: 38px;
  border-radius: 50%;
  background: #fff;
  box-shadow: 0 1px 5px rgba(0, 0, 0, .35);
  color: #f00;
  font-weight: 900;
  font-size: 37px;
  line-height: 37px;
  text-align: center;
}
.mark-8 { left: 151px; top: 237px; }
.mark-7 { left: 264px; top: 235px; }

.vscroll {
  flex: 1;
  background: #e6e6e6;
  border-left: 1px solid #9f9f9f;
  display: flex;
  flex-direction: column;
  align-items: flex-start;
  padding: 2px 0 0 3px;
}
.sbtn {
  width: 15px;
  height: 15px;
  box-sizing: border-box;
  background: #fff;
  border: 1px solid #b1b1b1;
  display: flex;
  align-items: center;
  justify-content: center;
}
.sbtn.bottom { margin-top: auto; }
.vthumb { width: 15px; height: 368px; box-sizing: border-box; background: #fff; border: 1px solid #b1b1b1; margin-top: 1px; }

/* sheet tabs */
.tabbar {
  height: 28px;
  flex: none;
  box-sizing: border-box;
  border-top: 1px solid #9f9f9f;
  border-bottom: 1px solid #d4d4d4;
  display: flex;
  align-items: center;
  background: #e6e6e6;
  z-index: 1;
}
.sheet-tab {
  align-self: flex-start;
  margin-left: 40px;
  margin-top: -1px;
  width: 73px;
  height: 25px;
  box-sizing: border-box;
  background: #fff;
  border: 1px solid #9f9f9f;
  border-top-color: #fff;
  border-bottom: 2px solid #217346;
  color: #217346;
  text-align: center;
  font-size: 12.500px;
  line-height: 24px;
  letter-spacing: .4px;
}
.grip.h { margin-left: 597px; }
.hscroll { margin-left: 14px; width: 509px; height: 15px; display: flex; }
.hbtn {
  width: 15px;
  height: 15px;
  box-sizing: border-box;
  background: #fff;
  border: 1px solid #b1b1b1;
  display: flex;
  align-items: center;
  justify-content: center;
}
.hthumb { width: 452px; background: #fff; box-sizing: border-box; border: 1px solid #b1b1b1; margin-right: 27px; }

/* status */
.status {
  height: 22px;
  flex: none;
  background: #f3f2f1;
  display: flex;
  align-items: center;
  padding-left: 8px;
  box-sizing: border-box;
}
.ready { width: 48px; white-space: nowrap; font-size: 12px; }
.views { margin-left: 971px; display: flex; height: 22px; }
.view { width: 40px; display: flex; align-items: center; justify-content: center; }
.view.on { background: #d2d2d2; }
.slider { margin-left: 5px; width: 100px; height: 1px; background: #aaa; position: relative; }
.slider i { position: absolute; left: 48px; top: -5px; width: 5px; height: 11px; background: #666; display: block; }
.zoom { margin-left: 13px; font-size: 12.500px; }
</style>
